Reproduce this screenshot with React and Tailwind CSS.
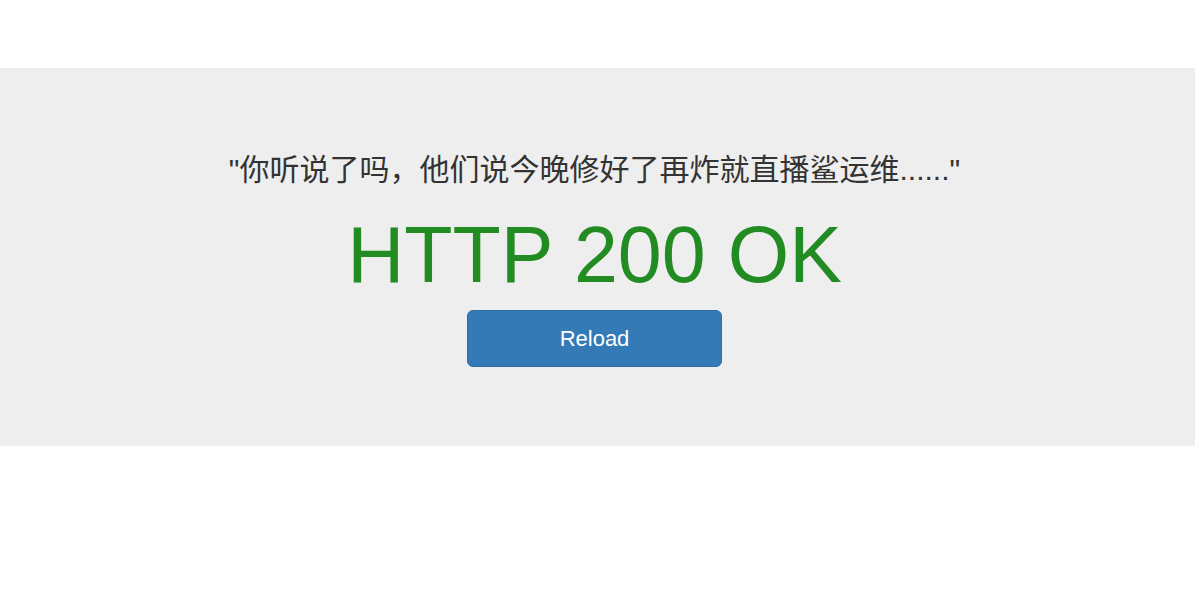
import React from 'react';

const App = () => {
  return (
    <div className="min-h-[597px] bg-white pt-[68px] font-['Liberation_Sans','Noto_Sans_CJK_SC',sans-serif]">
      {/* Jumbotron */}
      <div className="bg-[#eeeeee] pt-[81px] pb-[79px] pr-[6px] text-center">
        <p className="text-[30px] leading-[42px] text-[#333333]">
          "你听说了吗，他们说今晚修好了再炸就直播鲨运维......"
        </p>
        <h1 className="mt-[20px] text-[79px] leading-[88px] text-[#228b22]">HTTP 200 OK</h1>
        <button
          type="button"
          onClick={() => window.location.reload()}
          className="mt-[11px] h-[57px] w-[255px] rounded-[6px] border border-[#2e6da4] bg-[#337ab7] text-[22px] text-white"
        >
          Reload
        </button>
      </div>
    </div>
  );
};

export default App;
